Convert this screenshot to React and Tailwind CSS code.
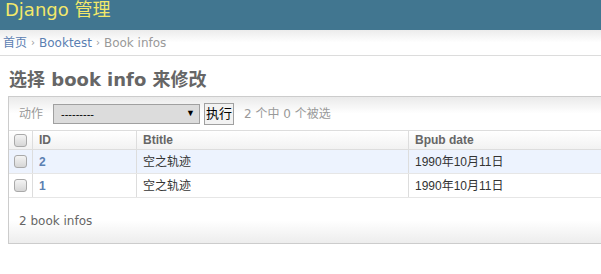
const sans = '"DejaVu Sans", "Noto Sans CJK SC", sans-serif'
const arial = '"Liberation Sans", "Noto Sans CJK SC", sans-serif'

function Box() {
  return (
    <span className="block h-[13px] w-[13px] rounded-[3px] border border-[#a9a9a9] bg-gradient-to-b from-[#f4f4f4] to-[#d6d6d6]" />
  )
}

const rows = [
  { id: 2, title: '空之轨迹', date: '1990年10月11日', bg: 'bg-[#edf3fe]' },
  { id: 1, title: '空之轨迹', date: '1990年10月11日', bg: 'bg-white' },
]

export default function App() {
  return (
    <div className="h-[274px] w-full overflow-hidden bg-white" style={{ fontFamily: sans }}>
      <div className="h-[30px] bg-[#417690] pl-[5px]">
        <h1 className="text-[18px] leading-[20px] text-[#f2e86a]">Django 管理</h1>
      </div>

      <div className="flex h-[26px] items-center border-b border-[#dcdcdc] bg-gradient-to-b from-[#ececec] via-white to-white pl-[3px] text-[12px] text-[#999]">
        <a className="text-[#5b80b2]">首页</a>
        <span className="mx-[4px] text-[10px]">›</span>
        <a className="text-[#5b80b2]">Booktest</a>
        <span className="mx-[4px] text-[10px]">›</span>
        <span>Book infos</span>
      </div>

      <h2 className="ml-[9px] mt-[12px] h-[28px] text-[18px] font-bold leading-[24px] text-[#666]">
        选择 book info 来修改
      </h2>

      <div className="ml-[8px] w-[640px] border border-[#ccc]">
        <div className="flex h-[33px] items-center bg-gradient-to-b from-[#eaeaea] via-white to-white pl-[10px] pt-[1px] text-[12px] text-[#999]">
          <span>动作</span>
          <div className="ml-[10px] flex h-[20px] w-[147px] items-center justify-between border border-[#a0a0a0] bg-[#dcdcdc] pl-[7px] pr-[4px] text-[11px] text-black" style={{ fontFamily: arial }}>
            <span>---------</span>
            <span className="text-[9px]">▼</span>
          </div>
          <button className="ml-[4px] h-[22px] border border-[#a0a0a0] bg-[#f2f2f2] px-[1px] text-[13px] leading-[20px] text-black">
            执行
          </button>
          <span className="ml-[10px]">2 个中 0 个被选</span>
        </div>

        <div className="flex h-[20px] items-center border-y border-[#ddd] bg-gradient-to-b from-white to-[#f2f2f2] text-[12px] font-bold text-[#666]" style={{ fontFamily: arial }}>
          <div className="flex h-full w-[24px] items-center justify-center border-r border-[#ddd]"><Box /></div>
          <div className="flex h-full w-[104px] items-center border-r border-[#ddd] pl-[6px]">ID</div>
          <div className="flex h-full w-[272px] items-center border-r border-[#ddd] pl-[6px]">Btitle</div>
          <div className="flex h-full items-center pl-[6px]">Bpub date</div>
        </div>

        {rows.map((r) => (
          <div key={r.id} className={`flex h-[24px] items-center border-b border-[#e6e6e6] text-[12px] text-[#333] ${r.bg}`} style={{ fontFamily: arial }}>
            <div className="flex h-full w-[24px] items-center justify-center border-r border-[#ddd]"><Box /></div>
            <div className="flex h-full w-[104px] items-center border-r border-[#ddd] pl-[6px] font-bold text-[#5b80b2]">{r.id}</div>
            <div className="flex h-full w-[272px] items-center border-r border-[#ddd] pl-[6px]">{r.title}</div>
            <div className="flex h-full items-center pl-[6px]">{r.date}</div>
          </div>
        ))}

        <div className="flex h-[45px] items-center bg-gradient-to-b from-white via-white to-[#ededed] pl-[10px] pt-[1px] text-[12px] text-[#666]">
          2 book infos
        </div>
      </div>
    </div>
  )
}
